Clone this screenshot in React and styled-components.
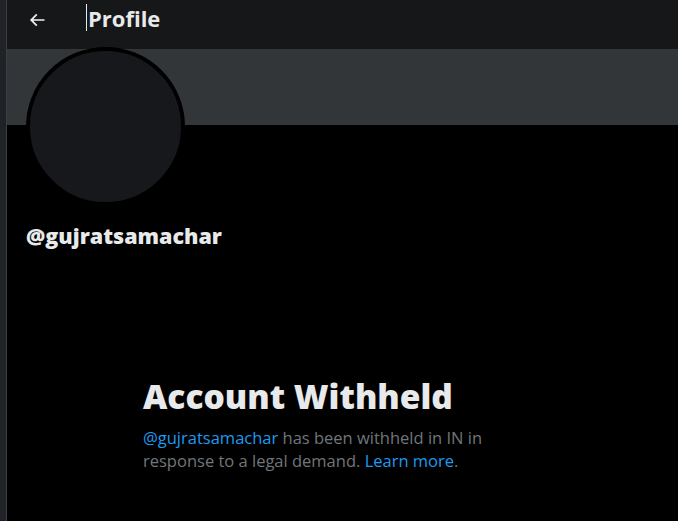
import React from 'react'
import styled, { createGlobalStyle } from 'styled-components'

const GlobalStyle = createGlobalStyle`
    html, body { margin: 0; padding: 0; background: #000; }
    body {
        font-family: "Open Sans", "Noto Sans", sans-serif;
        color: #e7e9ea;
        overflow: hidden;
    }
`

const Page = styled.div`
    display: flex;
    width: 678px;
    height: 521px;
    background: #000;
`
const SideStrip = styled.div`
    width: 6px;
    flex-shrink: 0;
    background: #1f2226;
    border-right: 1px solid #3a3d41;
`
const Main = styled.div`
    flex: 1;
    display: flex;
    flex-direction: column;
    min-width: 0;
`
const Header = styled.header`
    height: 49px;
    display: flex;
    align-items: center;
    background: #151719;
    padding-left: 20px;
`
const BackBtn = styled.button`
    width: 20px;
    height: 20px;
    padding: 0;
    border: 0;
    background: none;
    color: #eff3f4;
    display: flex;
    align-items: center;
    justify-content: center;
    margin-top: -10px;
`
const Title = styled.h2`
    margin: -13px 0 0 41px;
    font-size: 22px;
    font-weight: 700;
    line-height: 1;
    color: #e7e9ea;
    position: relative;
    &:before {
        content: '';
        position: absolute;
        left: -2px;
        top: -3px;
        width: 1px;
        height: 27px;
        background: #e7e9ea;
    }
`
const Banner = styled.div`
    height: 76px;
    background: #333639;
`
const ProfileArea = styled.div`
    padding-left: 19px;
`
const Avatar = styled.div`
    width: 151px;
    height: 151px;
    margin-top: -78px;
    border-radius: 50%;
    background: #16181c;
    border: 4px solid #000;
`
const Handle = styled.div`
    margin-top: 15px;
    font-size: 21.5px;
    font-weight: 800;
    color: #e7e9ea;
`
const Withheld = styled.section`
    margin: 126px 0 0 136px;
    width: 345px;
`
const Heading = styled.h1`
    margin: 0;
    font-size: 33.5px;
    font-weight: 800;
    line-height: 40px;
    color: #e7e9ea;
`
const Message = styled.p`
    margin: 10px 0 0;
    font-size: 16.5px;
    line-height: 23px;
    color: #71767b;
`
const Link = styled.a`
    color: #1d9bf0;
    text-decoration: none;
`

const ArrowIcon = () => (
    <svg viewBox="0 0 24 24" width="22" height="22" fill="currentColor">
        <path d="M7.414 13l5.043 5.04-1.414 1.42L3.586 12l7.457-7.46 1.414 1.42L7.414 11H21v2H7.414z" />
    </svg>
)

export default function App() {
    return (
        <Page>
            <GlobalStyle />
            <SideStrip />
            <Main>
                <Header>
                    <BackBtn><ArrowIcon /></BackBtn>
                    <Title>Profile</Title>
                </Header>
                <Banner />
                <ProfileArea>
                    <Avatar />
                    <Handle>@gujratsamachar</Handle>
                </ProfileArea>
                <Withheld>
                    <Heading>Account Withheld</Heading>
                    <Message>
                        <Link href="#">@gujratsamachar</Link> has been withheld in IN in response to a legal demand. <Link href="#">Learn more</Link>.
                    </Message>
                </Withheld>
            </Main>
        </Page>
    )
}
